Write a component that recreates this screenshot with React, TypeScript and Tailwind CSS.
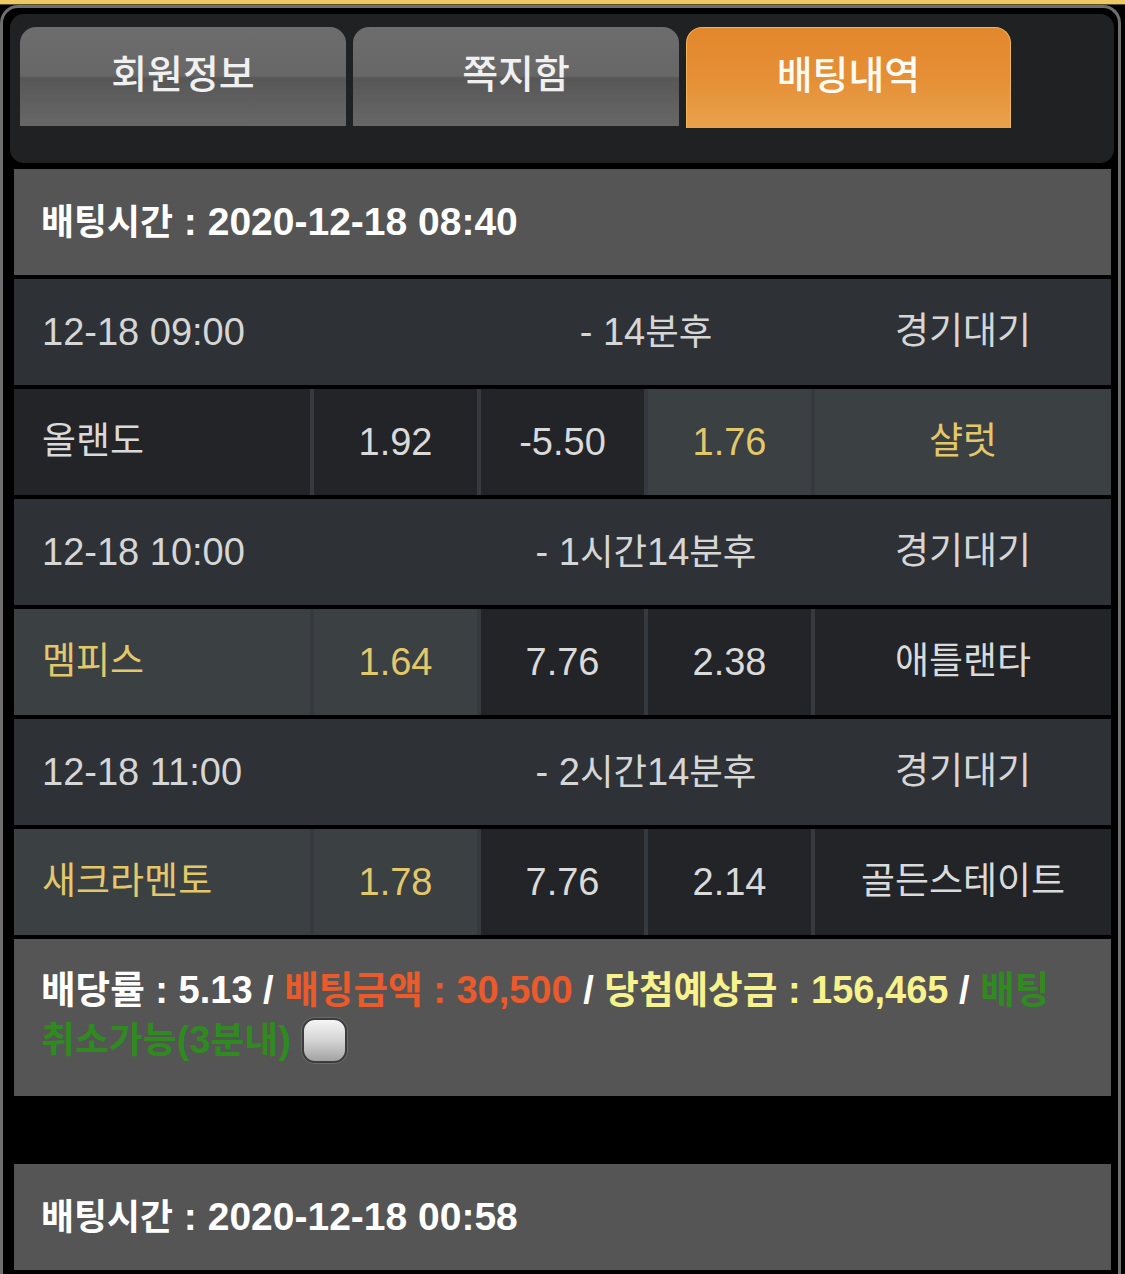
import React from "react";

type Game = {
  date: string;
  remain: string;
  status: string;
  home: string;
  homeOdd: string;
  mid: string;
  awayOdd: string;
  away: string;
  pick: "home" | "away";
};

const GAMES: Game[] = [
  { date: "12-18 09:00", remain: "- 14분후", status: "경기대기", home: "올랜도", homeOdd: "1.92", mid: "-5.50", awayOdd: "1.76", away: "샬럿", pick: "away" },
  { date: "12-18 10:00", remain: "- 1시간14분후", status: "경기대기", home: "멤피스", homeOdd: "1.64", mid: "7.76", awayOdd: "2.38", away: "애틀랜타", pick: "home" },
  { date: "12-18 11:00", remain: "- 2시간14분후", status: "경기대기", home: "새크라멘토", homeOdd: "1.78", mid: "7.76", awayOdd: "2.14", away: "골든스테이트", pick: "home" },
];

const FONT = { fontFamily: '"Liberation Sans", "Noto Sans CJK KR", sans-serif' };

// hangul runs get their own size so they sit like the narrow korean face in the shot
function Mixed({ text, ko = "text-[0.92em]" }: { text: string; ko?: string }) {
  const parts = text.split(/([\uAC00-\uD7A3]+)/);
  return (
    <span>
      {parts.map((p, i) =>
        /[\uAC00-\uD7A3]/.test(p) ? (
          <span key={i} className={ko}>
            {p}
          </span>
        ) : (
          <React.Fragment key={i}>{p}</React.Fragment>
        )
      )}
    </span>
  );
}

function Tab({ label, active }: { label: string; active?: boolean }) {
  if (active) {
    return (
      <div className="flex h-[101px] w-[325px] items-start justify-center rounded-t-[16px] border border-b-0 border-[#f2b458] bg-[linear-gradient(to_bottom,#e3872c_0%,#e58f36_50%,#e9a24c_100%)] pt-[23px]">
        <span className="text-[39px] font-medium leading-[50px] text-[#fffaf2]">{label}</span>
      </div>
    );
  }
  return (
    <div className="flex h-[99px] w-[326px] items-start justify-center rounded-t-[16px] bg-[linear-gradient(to_bottom,#6d6d6d_0%,#676767_49%,#575757_52%,#5e5e5e_72%,#676767_100%)] pt-[23px]">
      <span className="text-[39px] font-medium leading-[50px] text-[#f0f0f0]">{label}</span>
    </div>
  );
}

function Header({ time }: { time: string }) {
  return (
    <div className="flex h-[106px] items-center bg-[#555555] pl-[27px] text-[39px] font-bold text-white">
      <Mixed text={`배팅시간 : ${time}`} />
    </div>
  );
}

function GameRows({ g }: { g: Game }) {
  const hi = "bg-[#3b4043] text-[#e3c76b]";
  const lo = "bg-[#222427] text-[#dadada]";
  return (
    <>
      <div className="grid h-[106px] grid-cols-[1fr_163px_163px_163px_1fr] items-center gap-[4px] bg-[#2e3236] text-[38px] text-[#d6d6d6]">
        <div className="col-span-2 pl-[28px]">{g.date}</div>
        <div className="col-span-2 text-center">
          <Mixed text={g.remain} ko="text-[0.96em]" />
        </div>
        <div className="text-center text-[37px]">{g.status}</div>
      </div>
      <div className="grid h-[106px] grid-cols-[1fr_163px_163px_163px_1fr] gap-[4px] bg-[#363a3e] text-[38px]">
        <div className={`flex items-center pl-[28px] text-[37px] ${g.pick === "home" ? hi : lo}`}>{g.home}</div>
        <div className={`flex items-center justify-center ${g.pick === "home" ? hi : lo}`}>{g.homeOdd}</div>
        <div className={`flex items-center justify-center ${lo}`}>{g.mid}</div>
        <div className={`flex items-center justify-center ${g.pick === "away" ? hi : lo}`}>{g.awayOdd}</div>
        <div className={`flex items-center justify-center text-[37px] ${g.pick === "away" ? hi : lo}`}>{g.away}</div>
      </div>
    </>
  );
}

function Summary() {
  return (
    <div className="bg-[#555555] pb-[30px] pl-[27px] pt-[26px] text-[38px] font-bold leading-[50px]">
      <div className="whitespace-nowrap">
        <span className="text-white">
          <Mixed text="배당률 : 5.13 / " ko="text-[0.99em]" />
        </span>
        <span className="text-[#ea5a2b]">
          <Mixed text="배팅금액 : 30,500" ko="text-[0.99em]" />
        </span>
        <span className="text-white"> / </span>
        <span className="text-[#f7f28b]">
          <Mixed text="당첨예상금 : 156,465" ko="text-[0.99em]" />
        </span>
        <span className="text-white"> / </span>
        <span className="text-[#2f8a1f]">
          <Mixed text="배팅" ko="text-[0.99em]" />
        </span>
      </div>
      <div className="flex items-center whitespace-nowrap text-[#2f8a1f]">
        <Mixed text="취소가능(3분내)" ko="text-[0.97em]" />
        <span className="ml-[11px] inline-block h-[45px] w-[45px] rounded-[13px] border-2 border-[#3c3c3c] bg-[linear-gradient(to_bottom,#f5f5f5_0%,#d4d4d4_50%,#a3a3a3_100%)] shadow-[0_0_0_1px_#6a6a6a]" />
      </div>
    </div>
  );
}

export default function App() {
  return (
    <div className="min-h-[1274px] w-[1125px] overflow-hidden bg-black" style={FONT}>
      <div className="h-[4px] bg-[#ecc962]" />
      <div className="h-[1px] bg-[#5c4f2b]" />
      <div className="mr-[4px] rounded-t-[18px] border-x-[3px] border-t-[3px] border-[#6e6e6e] pl-[7px] pr-[4px] pt-[6px]">
        <div className="flex items-start gap-[7px] rounded-[14px] bg-[#1f2123] pb-[35px] pl-[10px] pt-[13px]">
          <Tab label="회원정보" />
          <Tab label="쪽지함" />
          <Tab label="배팅내역" active />
        </div>

        <div className="mt-[6px] flex flex-col pl-[4px] pr-[3px]">
          <div className="flex flex-col gap-[4px]">
            <Header time="2020-12-18 08:40" />
            {GAMES.map((g, i) => (
              <GameRows key={i} g={g} />
            ))}
            <Summary />
          </div>
          <div className="h-[68px]" />
          <Header time="2020-12-18 00:58" />
          <div className="h-[40px]" />
        </div>
      </div>
    </div>
  );
}
